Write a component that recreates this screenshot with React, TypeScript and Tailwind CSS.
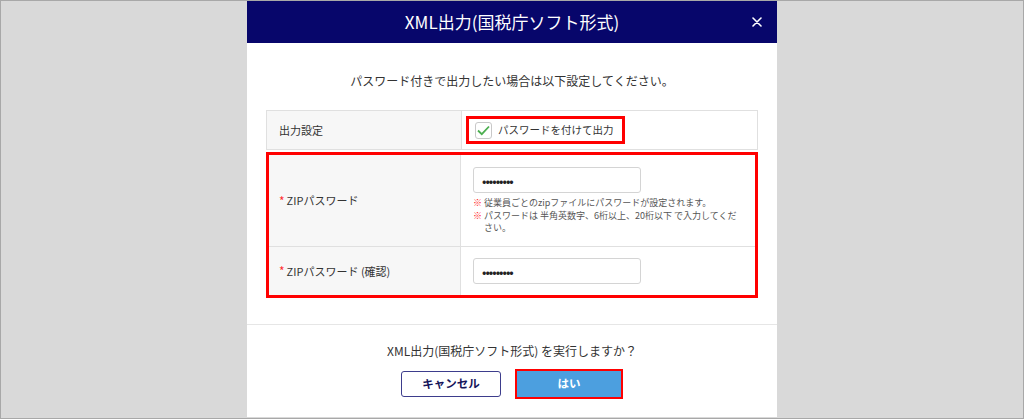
const jp = { fontFamily: '"Noto Sans CJK JP", "Noto Sans", sans-serif' };

function Note({ children }: { children: React.ReactNode }) {
  return (
    <div className="flex">
      <span className="w-[11px] shrink-0 font-bold text-[#ff1a1a]">※</span>
      <span className="whitespace-nowrap">{children}</span>
    </div>
  );
}

function PasswordInput() {
  return (
    <div className="flex h-[26px] w-[168px] items-center rounded-[3px] border border-[#d4d4d4] bg-white pl-[8px] text-[13px] leading-none tracking-[-1px] text-[#222]">
      •••••••••
    </div>
  );
}

function Label({ children }: { children: React.ReactNode }) {
  return (
    <div className="flex w-[192px] shrink-0 items-center border-r border-[#e0e0e0] bg-[#f7f7f7] pl-[10px] text-[11px] text-[#333]">
      <span className="mr-[2px] text-[12px] text-[#ff3030]">*</span>
      {children}
    </div>
  );
}

export default function App() {
  return (
    <div style={jp} className="flex h-[419px] w-[1024px] justify-center overflow-hidden border border-[#a8a8a8] bg-[#d9d9d9]">
      <div className="flex h-[416px] w-[530px] flex-col bg-white">
        {/* Header */}
        <div className="relative flex h-[42px] shrink-0 items-center justify-center bg-[#07066b] text-[17px] text-white">
          XML出力(国税庁ソフト形式)
          <svg className="absolute right-[15px] top-[16px]" width="10" height="10" viewBox="0 0 10 10">
            <path d="M1 1 L9 9 M9 1 L1 9" stroke="white" strokeWidth="1.6" strokeLinecap="round" />
          </svg>
        </div>

        <p className="mt-[28px] text-center text-[12px] leading-[20px] text-[#333]">
          パスワード付きで出力したい場合は以下設定してください。
        </p>

        {/* Table */}
        <div className="mx-[19px] mt-[19px]">
          <div className="flex h-[40px] border border-[#e0e0e0]">
            <div className="flex w-[195px] shrink-0 items-center border-r border-[#e0e0e0] bg-[#f7f7f7] pl-[12px] text-[11px] text-[#333]">
              出力設定
            </div>
            <div className="flex items-center pl-[4px]">
              <div className="flex h-[28px] items-center border-[3px] border-[#ff0000] pl-[6px] pr-[8px]">
                <span className="flex h-[17px] w-[17px] items-center justify-center rounded-[3px] border border-[#c8c8c8] bg-white">
                  <svg width="13" height="11" viewBox="0 0 13 11">
                    <path d="M1 5.5 L4.8 9.2 L12 1.5" fill="none" stroke="#4caf50" strokeWidth="1.8" />
                  </svg>
                </span>
                <span className="ml-[6px] text-[10.5px] text-[#333]">パスワードを付けて出力</span>
              </div>
            </div>
          </div>

          <div className="mt-[2px] border-[3px] border-[#ff0000]">
            <div className="flex h-[92px] border-b border-[#e0e0e0]">
              <Label>ZIPパスワード</Label>
              <div className="pl-[12px] pt-[12px]">
                <PasswordInput />
                <div className="mt-[4px] text-[9px] leading-[12.5px] text-[#555]">
                  <Note>従業員ごとのzipファイルにパスワードが設定されます。</Note>
                  <Note>
                    パスワードは 半角英数字、6桁以上、20桁以下 で入力してくだ
                    <br />
                    さい。
                  </Note>
                </div>
              </div>
            </div>
            <div className="flex h-[48px]">
              <Label>ZIPパスワード (確認)</Label>
              <div className="flex items-center pl-[12px]">
                <PasswordInput />
              </div>
            </div>
          </div>
        </div>

        {/* Footer */}
        <div className="mt-[26px] border-t border-[#e6e6e6] pt-[16px]">
          <p className="text-center text-[12px] leading-[20px] text-[#333]">
            XML出力(国税庁ソフト形式) を実行しますか？
          </p>
          <div className="mt-[8px] flex items-center justify-center gap-[14px]">
            <button className="h-[26px] w-[100px] rounded-[3px] border border-[#3d3d8c] bg-white text-[11.5px] font-bold text-[#14145a]">
              キャンセル
            </button>
            <div className="border-2 border-[#ff0000]">
              <button className="block h-[26px] w-[104px] bg-[#4c9fdf] text-[11.5px] font-bold text-white">
                はい
              </button>
            </div>
          </div>
        </div>
      </div>
    </div>
  );
}
